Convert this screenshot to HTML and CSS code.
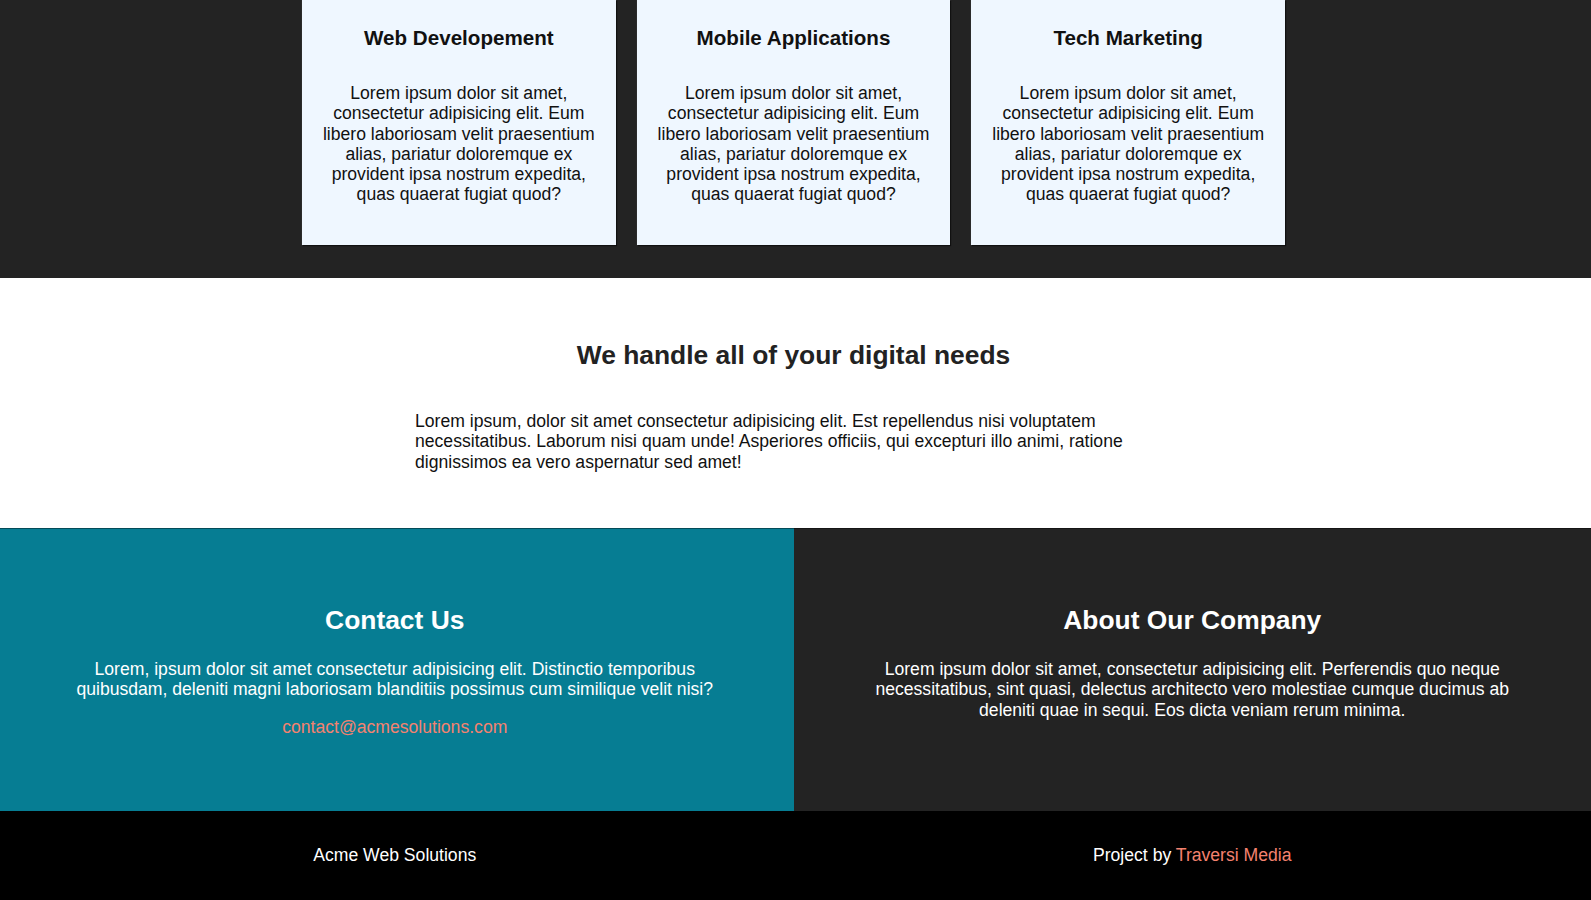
FILE: index.html
```html
<!DOCTYPE html>
<html lang="en">
<head>
<meta charset="utf-8">
<title>Acme Web Solutions</title>
<link rel="stylesheet" href="styles.css">
</head>
<body>
  <section class="services">
    <div class="boxes">
      <div class="box">
        <h3 class="box-title">Web Developement</h3>
        <p class="box-text">Lorem ipsum dolor sit amet, consectetur adipisicing elit. Eum libero laboriosam velit praesentium alias, pariatur doloremque ex provident ipsa nostrum expedita, quas quaerat fugiat quod?</p>
      </div>
      <div class="box">
        <h3 class="box-title">Mobile Applications</h3>
        <p class="box-text">Lorem ipsum dolor sit amet, consectetur adipisicing elit. Eum libero laboriosam velit praesentium alias, pariatur doloremque ex provident ipsa nostrum expedita, quas quaerat fugiat quod?</p>
      </div>
      <div class="box">
        <h3 class="box-title">Tech Marketing</h3>
        <p class="box-text">Lorem ipsum dolor sit amet, consectetur adipisicing elit. Eum libero laboriosam velit praesentium alias, pariatur doloremque ex provident ipsa nostrum expedita, quas quaerat fugiat quod?</p>
      </div>
    </div>
  </section>

  <section class="info">
    <div class="info-inner">
      <h2 class="info-title">We handle all of your digital needs</h2>
      <p class="info-text">Lorem ipsum, dolor sit amet consectetur adipisicing elit. Est repellendus nisi voluptatem necessitatibus. Laborum nisi quam unde! Asperiores officiis, qui excepturi illo animi, ratione dignissimos ea vero aspernatur sed amet!</p>
    </div>
  </section>

  <section class="split">
    <div class="panel panel-contact">
      <h2 class="panel-title">Contact Us</h2>
      <p class="panel-text">Lorem, ipsum dolor sit amet consectetur adipisicing elit. Distinctio temporibus quibusdam, deleniti magni laboriosam blanditiis possimus cum similique velit nisi?</p>
      <p class="panel-mail"><a href="#" class="accent">contact@acmesolutions.com</a></p>
    </div>
    <div class="panel panel-about">
      <h2 class="panel-title">About Our Company</h2>
      <p class="panel-text">Lorem ipsum dolor sit amet, consectetur adipisicing elit. Perferendis quo neque necessitatibus, sint quasi, delectus architecto vero molestiae cumque ducimus ab deleniti quae in sequi. Eos dicta veniam rerum minima.</p>
    </div>
  </section>

  <footer class="footer">
    <p class="footer-text">Acme Web Solutions</p>
    <p class="footer-text">Project by <a href="#" class="accent">Traversi Media</a></p>
  </footer>
</body>
</html>
```

FILE: styles.css
```css
* {
  box-sizing: border-box;
}

html, body {
  margin: 0;
  padding: 0;
}

body {
  font-family: "Liberation Sans", Arial, sans-serif;
  font-size: 17.6px;
  line-height: normal;
  color: #111;
  background: #000;
}

p, h2, h3 {
  margin: 0;
}

p {
  line-height: 20.25px;
}

.accent {
  color: #f4826f;
  text-decoration: none;
}

/* Services */
.services {
  background: #232323;
  padding: 0 4px 33px 0;
}

.boxes {
  width: 983px;
  margin: 0 auto;
  display: grid;
  grid-template-columns: repeat(3, 1fr);
  gap: 21px;
}

.box {
  background: #eff7ff;
  text-align: center;
  padding: 26px 15px 41px;
  height: 245px;
  box-shadow: 1px 1px 1px rgba(0, 0, 0, 0.6), 0 0 1px rgba(120, 120, 120, 0.6);
}

.box-title {
  font-size: 20.6px;
  font-weight: bold;
  color: #111;
  margin-bottom: 33px;
}

.box-text {
  color: #111;
}

/* Info */
.info {
  background: #fff;
  height: 250px;
  padding: 62px 4px 0 0;
}

.info-inner {
  width: 757px;
  margin: 0 auto;
}

.info-title {
  font-size: 26.4px;
  font-weight: bold;
  color: #222;
  text-align: center;
  margin-bottom: 40px;
}

.info-text {
  color: #111;
}

/* Contact / About */
.split {
  display: grid;
  grid-template-columns: 793.5px 1fr;
  height: 283px;
  color: #fff;
}

.panel {
  text-align: center;
  padding: 77px 64px 0;
  box-shadow: inset 0 1px 0 rgba(0, 0, 0, 0.4);
}

.panel-contact {
  background: #067d93;
  padding-right: 68px;
}

.panel-about {
  background: #232323;
}

.panel-title {
  font-size: 26.4px;
  font-weight: bold;
  margin-bottom: 23px;
}

.panel-mail {
  margin-top: 17px;
}

/* Footer */
.footer {
  background: #000;
  color: #fff;
  display: grid;
  grid-template-columns: 789.5px 1fr;
  column-gap: 4px;
  text-align: center;
  padding: 34px 0 35px;
}
```
